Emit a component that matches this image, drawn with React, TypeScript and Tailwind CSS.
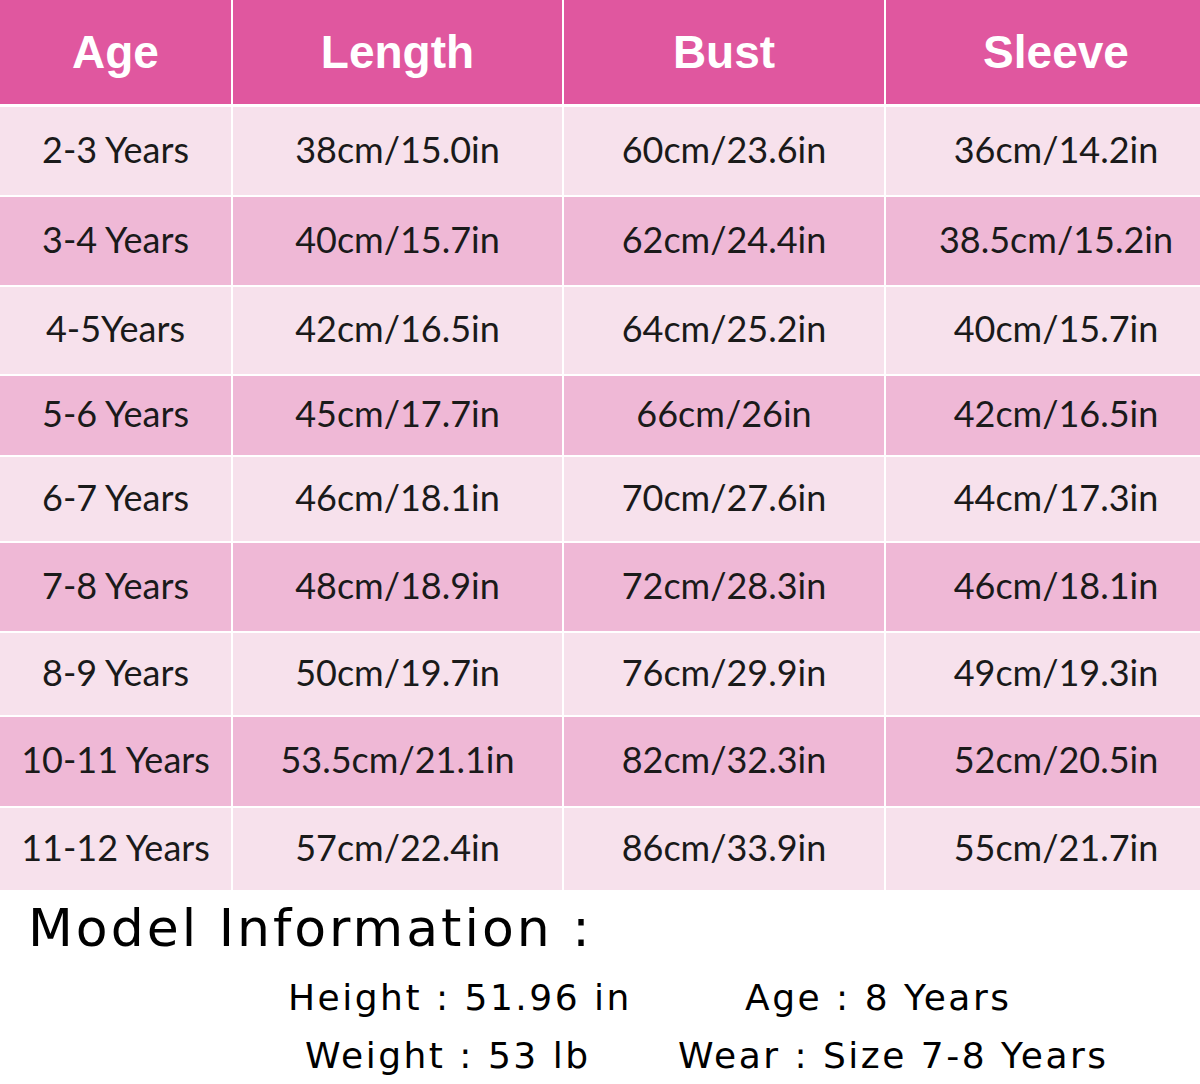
const rows: { h: string; dark: boolean; cells: string[] }[] = [
  { h: "h-[88px]", dark: false, cells: ["2-3 Years", "38cm/15.0in", "60cm/23.6in", "36cm/14.2in"] },
  { h: "h-[88px]", dark: true, cells: ["3-4 Years", "40cm/15.7in", "62cm/24.4in", "38.5cm/15.2in"] },
  { h: "h-[87px]", dark: false, cells: ["4-5Years", "42cm/16.5in", "64cm/25.2in", "40cm/15.7in"] },
  { h: "h-[79px]", dark: true, cells: ["5-6 Years", "45cm/17.7in", "66cm/26in", "42cm/16.5in"] },
  { h: "h-[84px]", dark: false, cells: ["6-7 Years", "46cm/18.1in", "70cm/27.6in", "44cm/17.3in"] },
  { h: "h-[88px]", dark: true, cells: ["7-8 Years", "48cm/18.9in", "72cm/28.3in", "46cm/18.1in"] },
  { h: "h-[82px]", dark: false, cells: ["8-9 Years", "50cm/19.7in", "76cm/29.9in", "49cm/19.3in"] },
  { h: "h-[89px]", dark: true, cells: ["10-11 Years", "53.5cm/21.1in", "82cm/32.3in", "52cm/20.5in"] },
  { h: "h-[82px]", dark: false, cells: ["11-12 Years", "57cm/22.4in", "86cm/33.9in", "55cm/21.7in"] },
];

const headers = ["Age", "Length", "Bust", "Sleeve"];
const cols = "grid grid-cols-[231px_329px_320px_1fr] gap-x-[2px]";

export default function App() {
  return (
    <div className="w-[1200px] h-[1084px] bg-white overflow-hidden">
      <div className={`${cols} h-[104px] bg-white`}>
        {headers.map((t, j) => (
          <div
            key={t}
            className={`bg-[#e0579f] flex items-center justify-center ${j === 3 ? "pl-[26px]" : ""} text-white font-bold text-[46px] font-['Liberation_Sans',Arial,sans-serif]`}
          >
            {t}
          </div>
        ))}
      </div>
      <div className="flex flex-col gap-[2px] pt-[3px] bg-white">
        {rows.map((r, i) => (
          <div key={i} className={`${cols} ${r.h}`}>
            {r.cells.map((c, j) => (
              <div
                key={j}
                className={`${r.dark ? "bg-[#efb8d6]" : "bg-[#f7e1ec]"} flex items-center justify-center pb-[5px] ${j === 3 ? "pl-[26px]" : ""} text-[#1a1a1a] text-[36px] font-['Lato','Open_Sans',sans-serif]`}
              >
                {c}
              </div>
            ))}
          </div>
        ))}
      </div>
      <div className="font-['DejaVu_Sans',sans-serif] text-black whitespace-nowrap">
        <div className="pl-[28px] pt-[6px] text-[52px] leading-[64px] tracking-[3px]">Model Information :</div>
        <div className="grid grid-cols-[560px_1fr] mt-[9px] text-[36px] leading-[58px] tracking-[2.5px]">
          <div className="pl-[288px]">Height : 51.96 in</div>
          <div className="pl-[185px]">Age : 8 Years</div>
          <div className="pl-[305px]">Weight : 53 lb</div>
          <div className="pl-[118px]">Wear : Size 7-8 Years</div>
        </div>
      </div>
    </div>
  );
}
